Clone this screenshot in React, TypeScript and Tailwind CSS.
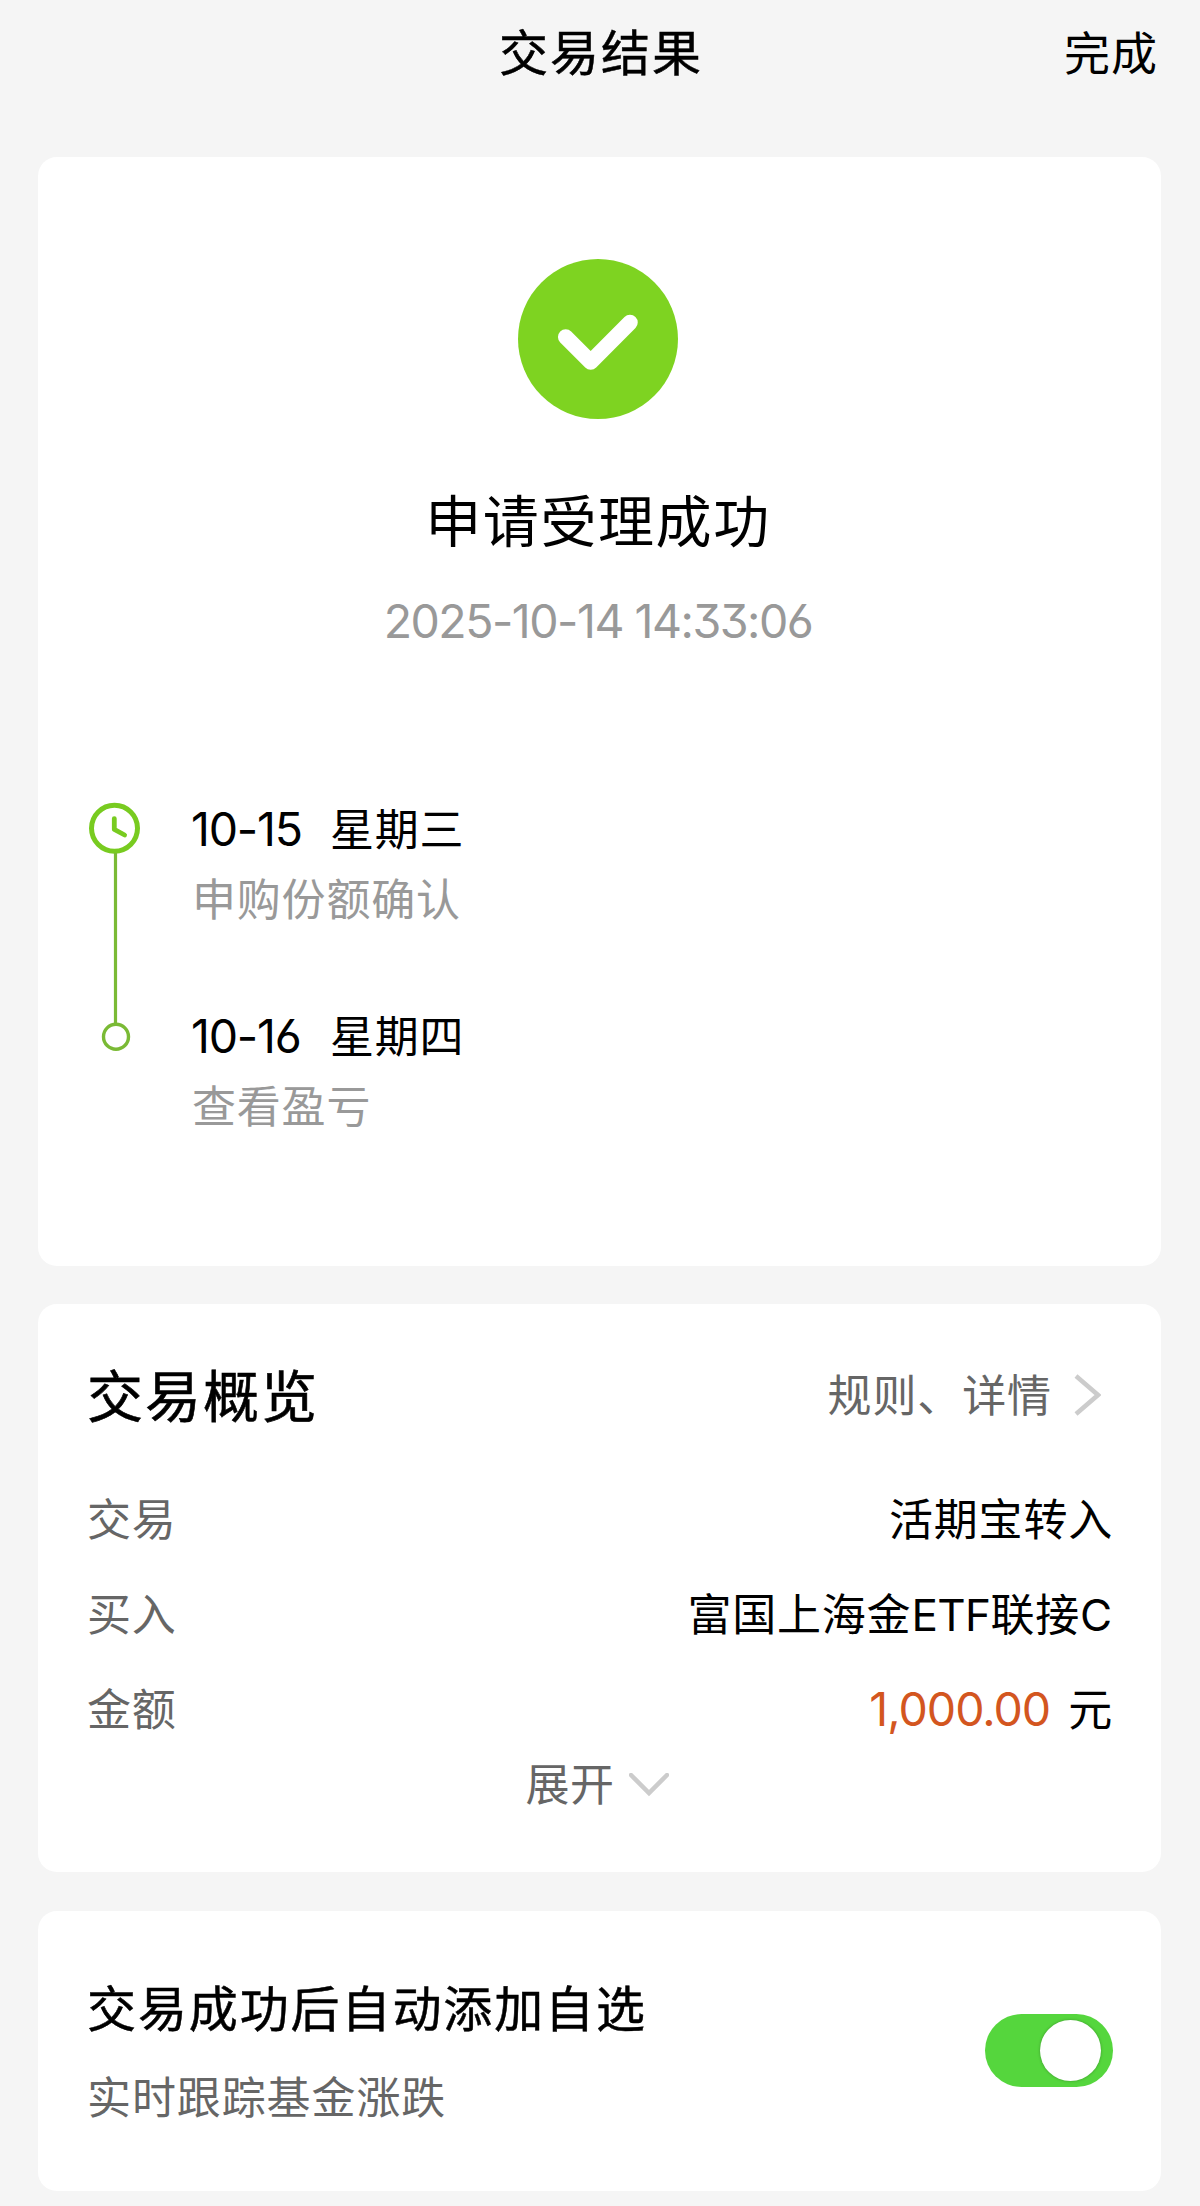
import React from "react";

const steps = [
  { date: "10-15", day: "星期三", note: "申购份额确认" },
  { date: "10-16", day: "星期四", note: "查看盈亏" },
];

function SuccessIcon() {
  return (
    <svg className="block size-40" viewBox="0 0 160 160" fill="none">
      <circle cx="80" cy="80" r="80" fill="#7ed321" />
      <path d="M47.7 78 72.7 103 112 63.5" stroke="#fff" strokeWidth="15.5" strokeLinecap="round" strokeLinejoin="round" />
    </svg>
  );
}

function TimelineRail() {
  return (
    <svg className="block h-[252px] w-[54px] shrink-0" viewBox="0 0 54 252" fill="none">
      <circle cx="27.5" cy="27.3" r="23" stroke="#78cb20" strokeWidth="5" />
      <path d="M27.3 17.6V28.4L37.6 34" stroke="#78cb20" strokeWidth="4.8" strokeLinecap="round" strokeLinejoin="round" />
      <path d="M28.5 52V223" stroke="#7aba35" strokeWidth="3.2" />
      <circle cx="29" cy="235.7" r="12.5" stroke="#7aba35" strokeWidth="3.4" />
    </svg>
  );
}

function Row({ label, children }: { label: string; children: React.ReactNode }) {
  return (
    <div className="flex h-[95px] items-center justify-between text-[44px] tracking-[0.8px]">
      <span className="text-[#666]">{label}</span>
      <span>{children}</span>
    </div>
  );
}

export default function App() {
  return (
    <div className="h-[2206px] w-[1200px] overflow-hidden bg-[#f5f5f5] pr-[39px] pl-[38px] font-['Inter','Noto_Sans_CJK_SC',sans-serif] leading-[60px] whitespace-nowrap text-black [font-feature-settings:'cv03','cv09']">
      <header className="grid h-[157px] grid-cols-3 items-start pt-[24px]">
        <span />
        <h1 className="pl-[3px] text-center text-[49px] tracking-[2px] [-webkit-text-stroke:0.5px_black]">交易结果</h1>
        <button className="-mt-px justify-self-end pr-[3px] text-[46px] leading-[60px] tracking-[1px]">完成</button>
      </header>

      <section className="h-[1109px] rounded-[19px] bg-white pt-[102px]">
        <div className="flex flex-col items-center pr-[3px]">
          <SuccessIcon />
          <h2 className="mt-[63px] text-[56px] leading-[80px] tracking-[1.6px]">申请受理成功</h2>
          <p className="mt-[29px] text-[46.5px] tracking-[-1.5px] text-[#999]">2025-10-14 14:33:06</p>
        </div>
        <div className="mt-[148px] flex pl-[49px]">
          <div className="pt-[2px]">
            <TimelineRail />
          </div>
          <ul className="flex flex-col gap-[76px] pl-[50px]">
            {steps.map((s) => (
              <li key={s.date}>
                <div className="flex">
                  <span className="w-[139px] text-[46.5px] tracking-[-1.2px]">{s.date}</span>
                  <span className="pt-px text-[44px] tracking-[0.7px]">{s.day}</span>
                </div>
                <div className="mt-[10px] pl-px text-[44px] tracking-[0.8px] text-[#999]">{s.note}</div>
              </li>
            ))}
          </ul>
        </div>
      </section>

      <section className="mt-[38px] h-[568px] rounded-[19px] bg-white pr-[48px] pl-[49px] pt-[63px]">
        <div className="mb-[45px] flex h-[60px] items-center justify-between">
          <h2 className="text-[56px] tracking-[2px] [-webkit-text-stroke:0.6px_black]">交易概览</h2>
          <a className="-mt-[2px] flex items-center gap-[22px] pr-[12px] text-[44px] tracking-[0.9px] text-[#666]">
            规则、详情
            <svg className="-mt-[2px] h-[42px] w-[27px]" viewBox="0 0 27 42" fill="none">
              <path d="M2 2 24 21 2 40" stroke="#ccc" strokeWidth="4.5" />
            </svg>
          </a>
        </div>
        <Row label="交易">活期宝转入</Row>
        <Row label="买入">富国上海金<span className="tracking-[-0.6px]">ETF</span>联接C</Row>
        <Row label="金额">
          <span className="mr-[18px] text-[46.5px] tracking-[-1px] text-[#d3561f]">1,000.00</span>元
        </Row>
        <button className="mx-auto -mt-[2px] flex h-[60px] items-center gap-[14px] pr-[6px] text-[44px] tracking-[0.6px] text-[#666]">
          展开
          <svg className="h-[24px] w-[40px]" viewBox="0 0 40 24" fill="none">
            <path d="M2 2 20 20 38 2" stroke="#ccc" strokeWidth="4.5" strokeLinecap="round" />
          </svg>
        </button>
      </section>

      <section className="mt-[39px] flex h-[280px] items-center justify-between rounded-[19px] bg-white pr-[48px] pl-[49px]">
        <div className="pt-[5px]">
          <h2 className="text-[49px] tracking-[1.9px] [-webkit-text-stroke:0.5px_black]">交易成功后自动添加自选</h2>
          <p className="mt-[28px] text-[44px] tracking-[0.9px] text-[#666]">实时跟踪基金涨跌</p>
        </div>
        <button role="switch" aria-checked="true" className="-mt-[2px] flex h-[73px] w-[128px] items-center justify-end rounded-full bg-[#55d63d] pr-[12px]">
          <span className="size-[61px] rounded-full bg-white shadow-[0_0_3px_rgba(0,0,0,0.3)]" />
        </button>
      </section>
    </div>
  );
}
